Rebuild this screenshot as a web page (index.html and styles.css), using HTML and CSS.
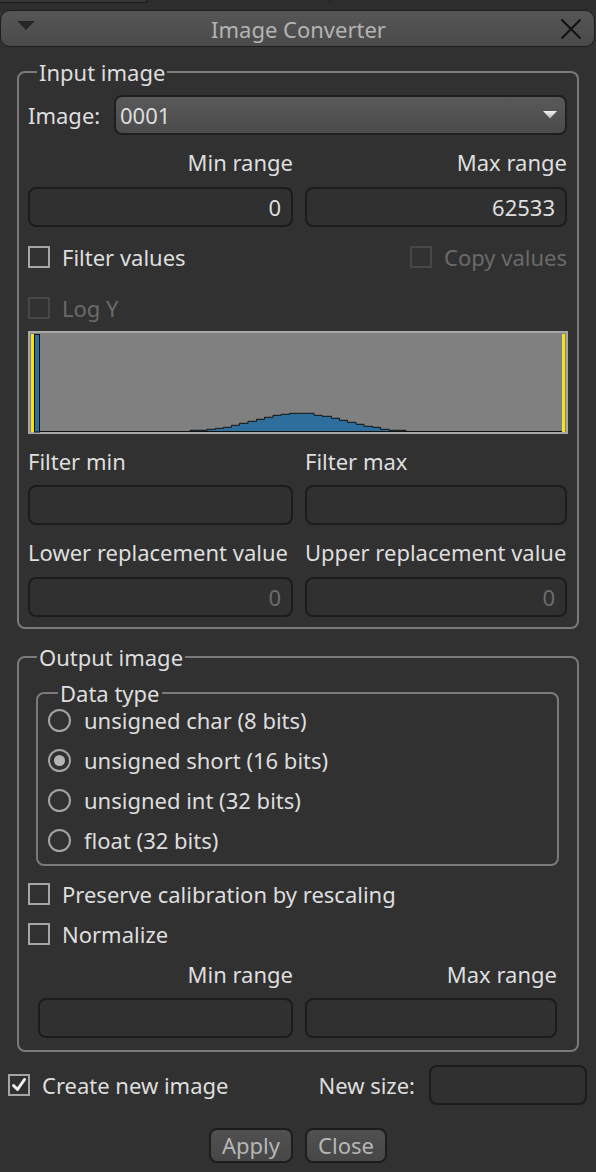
FILE: index.html
```html
<!DOCTYPE html>
<html>
<head>
<meta charset="utf-8">
<link rel="stylesheet" href="styles.css">
</head>
<body>
<div class="topstrip"><div class="tab1"></div><div class="tab2"></div></div>
<div class="titlebar">
  <svg class="menu-tri" width="18" height="10" viewBox="0 0 18 10"><path d="M0 0 H18 L9 9 Z" fill="#262626"/></svg>
  <span class="title">Image Converter</span>
  <svg class="close-x" width="22" height="22" viewBox="0 0 22 22"><path d="M1.5 1.5 L20.5 20.5 M20.5 1.5 L1.5 20.5" stroke="#111" stroke-width="2" fill="none"/></svg>
</div>

<fieldset class="group input-group">
  <legend>Input image</legend>
  <div class="combo-row">
    <span class="combo-label">Image:</span>
    <div class="combo"><span>0001</span><svg width="14" height="8" viewBox="0 0 14 8"><defs><linearGradient id="ag" x1="0" y1="0" x2="0" y2="1"><stop offset="0" stop-color="#f2f2f2"/><stop offset="1" stop-color="#b8b8b8"/></linearGradient></defs><path d="M0 0 H14 L7 7.5 Z" fill="url(#ag)"/></svg></div>
  </div>
  <div class="pair labels right gap-15"><span>Min range</span><span>Max range</span></div>
  <div class="pair gap-13"><div class="field num">0</div><div class="field num">62533</div></div>
  <div class="row split gap-18">
    <div class="check"><span class="box"></span><span>Filter values</span></div>
    <div class="check disabled"><span class="box"></span><span>Copy values</span></div>
  </div>
  <div class="row gap-27">
    <div class="check disabled"><span class="box"></span><span>Log Y</span></div>
  </div>
  <div class="hist gap-11">
    <svg width="540" height="103" viewBox="0 0 540 103">
      <rect x="0" y="0" width="540" height="103" fill="#a8a8a8"/>
      <rect x="2" y="2" width="536" height="99" fill="#808080"/>
      <path d="M162 100.5 V99.3 H179 V98.3 H187.5 V97.3 H195.5 V96.3 H203.5 V94.3 H211.5 V92.3 H220 V90.3 H228.5 V88.3 H236.5 V86.3 H245 V84.3 H253 V83.3 H261.5 V82.3 H286 V84.3 H294 V85.3 H303.5 V87.3 H311.5 V89.3 H319.5 V91.3 H328 V93.3 H336 V95.3 H344.5 V96.3 H352.5 V98.3 H361 V99.3 H378 V100.5 Z" fill="#2e6e9c" stroke="#111" stroke-width="1"/>
      <line x1="12" y1="100.5" x2="534" y2="100.5" stroke="#111" stroke-width="1"/>
      <rect x="6.5" y="3.5" width="5" height="97.5" fill="#2e6e9c" stroke="#111" stroke-width="1"/>
      <rect x="3" y="3" width="3" height="98" fill="#f5e31a"/>
      <rect x="534" y="3" width="3" height="98" fill="#f5e31a"/>
    </svg>
  </div>
  <div class="pair labels gap-15"><span>Filter min</span><span>Filter max</span></div>
  <div class="pair gap-12"><div class="field"></div><div class="field"></div></div>
  <div class="pair labels gap-15"><span>Lower replacement value</span><span>Upper replacement value</span></div>
  <div class="pair gap-13"><div class="field num dim">0</div><div class="field num dim">0</div></div>
</fieldset>

<fieldset class="group output-group">
  <legend>Output image</legend>
  <fieldset class="subgroup">
    <legend>Data type</legend>
    <div class="radio"><span class="circle"></span><span>unsigned char (8 bits)</span></div>
    <div class="radio checked"><span class="circle"></span><span>unsigned short (16 bits)</span></div>
    <div class="radio"><span class="circle"></span><span>unsigned int (32 bits)</span></div>
    <div class="radio"><span class="circle"></span><span>float (32 bits)</span></div>
  </fieldset>
  <div class="row gap-16">
    <div class="check"><span class="box"></span><span>Preserve calibration by rescaling</span></div>
  </div>
  <div class="row gap-16">
    <div class="check"><span class="box"></span><span>Normalize</span></div>
  </div>
  <div class="pair inset labels right gap-16"><span>Min range</span><span>Max range</span></div>
  <div class="pair inset gap-12"><div class="field"></div><div class="field"></div></div>
</fieldset>

<div class="bottom-row">
  <div class="check checked"><span class="box"><svg width="18" height="18" viewBox="0 0 18 18"><path d="M3.5 9.5 L7.5 13.5 L14.5 3.5" stroke="#f0f0f0" stroke-width="3" fill="none" stroke-linecap="round" stroke-linejoin="round"/></svg></span><span>Create new image</span></div>
  <div class="spacer"></div>
  <span class="newsize-label">New size:</span>
  <div class="field newsize"></div>
</div>

<div class="buttons">
  <div class="btn apply">Apply</div>
  <div class="btn close">Close</div>
</div>
</body>
</html>
```

FILE: styles.css
```css
html, body {
  margin: 0;
  padding: 0;
}
body {
  width: 596px;
  height: 1172px;
  overflow: hidden;
  background: #313131;
  font-family: "Noto Sans", "Open Sans", sans-serif;
  font-size: 22px;
  line-height: 24px;
  color: #dedede;
}

.topstrip {
  height: 10px;
  display: flex;
  background: #2d2d2d;
}
.tab1 {
  width: 146px;
  height: 2px;
  border-right: 1px solid #1c1c1c;
  border-bottom: 1px solid #1c1c1c;
  background: #363636;
}
.tab2 {
  width: 182px;
  height: 4px;
  border-right: 1px solid #232323;
}

.titlebar {
  height: 37px;
  width: 595px;
  box-sizing: border-box;
  border: 1px solid #1e1e1e;
  border-radius: 10px;
  background: linear-gradient(#565656, #4a4a4a);
  display: flex;
  align-items: center;
  padding: 0 16px 0 16px;
}
.menu-tri {
  flex-shrink: 0;
  margin-top: -6px;
}
.title {
  flex: 1;
  text-align: center;
  color: #b4b4b4;
  margin-left: 2px;
}
.close-x {
  flex-shrink: 0;
  margin-right: -4px;
}

.group {
  margin: 13px 17px 0;
  padding: 11px 10px 10px 9px;
  border: 2px solid #7a7a7a;
  border-radius: 8px;
  min-width: 0;
}
.group > legend,
.subgroup > legend {
  margin-left: 9px;
  padding: 0 2px;
  line-height: 24px;
}
.output-group {
  margin-top: 16px;
  padding: 12px 10px 12px 9px;
}
.subgroup {
  margin: 0 8px;
  padding: 3px 10px 12px;
  border: 2px solid #7a7a7a;
  border-radius: 8px;
  min-width: 0;
}
.subgroup > legend {
  margin-left: 10px;
}

.combo-row {
  display: flex;
  align-items: center;
  height: 40px;
}
.combo-label {
  width: 86px;
  flex-shrink: 0;
}
.combo {
  flex: 1;
  height: 40px;
  box-sizing: border-box;
  border: 2px solid #1f1f1f;
  border-radius: 8px;
  background: linear-gradient(#595959, #4b4b4b);
  display: flex;
  align-items: center;
  justify-content: space-between;
  padding: 0 8px 0 4px;
}

.pair {
  display: grid;
  grid-template-columns: 265px 1fr;
  column-gap: 12px;
}
.pair.inset {
  margin-left: 10px;
  margin-right: 10px;
  grid-template-columns: 255px 1fr;
}
.labels {
  height: 24px;
  white-space: nowrap;
}
.labels.right span {
  text-align: right;
}

.field {
  height: 40px;
  box-sizing: border-box;
  border: 2px solid #1c1c1c;
  border-radius: 8px;
  background: #303030;
  padding: 0 10px;
  line-height: 36px;
}
.field.num {
  text-align: right;
}
.field.dim {
  color: #6c6c6c;
}

.row {
  display: flex;
  align-items: center;
  height: 24px;
}
.row.split {
  justify-content: space-between;
}

.check, .radio {
  display: flex;
  align-items: center;
  gap: 12px;
  white-space: nowrap;
}
.box {
  width: 22px;
  height: 22px;
  box-sizing: border-box;
  border: 2px solid #a6a6a6;
  display: flex;
  align-items: center;
  justify-content: center;
  flex-shrink: 0;
}
.check.disabled {
  color: #6a6a6a;
}
.check.disabled .box {
  border-color: #474747;
}

.radio {
  height: 24px;
  gap: 13px;
}
.radio + .radio {
  margin-top: 16px;
}
.circle {
  width: 23px;
  height: 23px;
  box-sizing: border-box;
  border: 2px solid #a4a4a4;
  border-radius: 50%;
  display: flex;
  align-items: center;
  justify-content: center;
  flex-shrink: 0;
}
.radio.checked .circle::after {
  content: "";
  width: 11px;
  height: 11px;
  border-radius: 50%;
  background: #b4b4b4;
}

.hist {
  height: 103px;
}
.hist svg {
  display: block;
}

.gap-11 { margin-top: 11px; }
.gap-12 { margin-top: 12px; }
.gap-13 { margin-top: 13px; }
.gap-15 { margin-top: 15px; }
.gap-16 { margin-top: 16px; }
.gap-18 { margin-top: 18px; }
.gap-27 { margin-top: 27px; }

.bottom-row {
  display: flex;
  align-items: center;
  height: 40px;
  margin-top: 13px;
  padding: 0 9px 0 8px;
}
.spacer {
  flex: 1;
}
.newsize-label {
  margin-right: 14px;
}
.field.newsize {
  width: 158px;
  flex-shrink: 0;
}

.buttons {
  display: flex;
  justify-content: center;
  gap: 12px;
  margin-top: 23px;
}
.btn {
  height: 35px;
  box-sizing: border-box;
  border: 2px solid #1d1d1d;
  border-radius: 8px;
  background: linear-gradient(#505050, #474747);
  color: #b6b6b6;
  line-height: 31px;
  text-align: center;
}
.btn.apply { width: 84px; }
.btn.close { width: 82px; }
```
